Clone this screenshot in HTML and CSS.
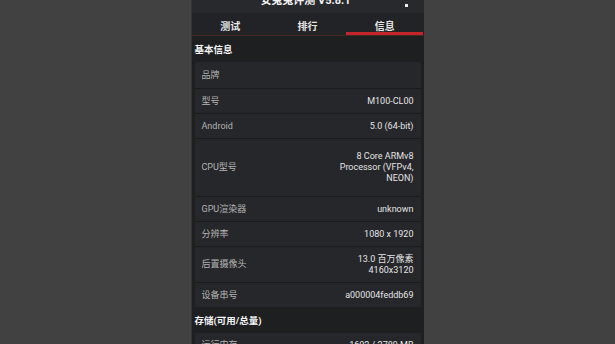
FILE: index.html
```html
<!DOCTYPE html>
<html lang="zh">
<head>
<meta charset="utf-8">
<link rel="stylesheet" href="styles.css">
</head>
<body>
<div class="phone">
  <div class="titlebar">
    <span class="title">安兔兔评测 V5.8.1</span>
    <span class="overflow"><i></i><i></i><i></i></span>
  </div>
  <div class="tabs">
    <div class="tab">测试</div>
    <div class="tab">排行</div>
    <div class="tab active">信息</div>
  </div>
  <div class="section">基本信息</div>
  <div class="card">
    <div class="row r26"><span class="label">品牌</span><span class="value"></span></div>
    <div class="row"><span class="label">型号</span><span class="value">M100-CL00</span></div>
    <div class="row"><span class="label">Android</span><span class="value">5.0 (64-bit)</span></div>
    <div class="row cpu"><span class="label">CPU型号</span><span class="value">8 Core ARMv8<br>Processor (VFPv4,<br>NEON)</span></div>
    <div class="row"><span class="label">GPU渲染器</span><span class="value">unknown</span></div>
    <div class="row"><span class="label">分辨率</span><span class="value">1080 x 1920</span></div>
    <div class="row cam"><span class="label">后置摄像头</span><span class="value">13.0 百万像素<br>4160x3120</span></div>
    <div class="row"><span class="label">设备串号</span><span class="value">a000004feddb69</span></div>
  </div>
  <div class="section">存储(可用/总量)</div>
  <div class="card">
    <div class="row"><span class="label">运行内存</span><span class="value">1602 / 2789 MB</span></div>
  </div>
</div>
</body>
</html>
```
FILE: styles.css
```css
html, body {
  margin: 0;
  padding: 0;
  background: #414141;
  height: 344px;
  overflow: hidden;
  font-family: Roboto, "Noto Sans CJK SC", sans-serif;
}
.phone {
  width: 232px;
  margin: -12px auto 0;
  height: 380px;
  background: #1e1f21;
  box-shadow: -1px 0 0 #363636;
  overflow: hidden;
}
.titlebar {
  height: 25px;
  background: #28292c;
  display: flex;
  align-items: center;
  justify-content: center;
  position: relative;
}
.title {
  color: #f2f2f2;
  font-size: 11px;
  font-weight: bold;
  margin-left: -4px;
  margin-top: -3px;
}
.overflow {
  position: absolute;
  right: 16px;
  top: 2px;
  display: flex;
  flex-direction: column;
  gap: 4px;
}
.overflow i {
  display: block;
  width: 3px;
  height: 3px;
  background: #eee;
}
.tabs {
  display: flex;
  height: 22px;
  background: #222326;
  border-bottom: 1px solid #43291f;
}
.tab {
  flex: 1;
  display: flex;
  align-items: center;
  justify-content: center;
  color: #e6e6e6;
  font-size: 10px;
  font-weight: bold;
  padding-top: 2px;
  box-sizing: border-box;
}
.tab.active {
  border-bottom: 3px solid #c2262c;
  padding-top: 5px;
}
.section {
  height: 26px;
  display: flex;
  align-items: center;
  padding-left: 3px;
  color: #f5f5f5;
  font-size: 9.5px;
  font-weight: bold;
}
.card {
  margin: 0 3px;
  display: flex;
  flex-direction: column;
  gap: 1px;
  background: #1b1c1e;
}
.row {
  background: #26272a;
  min-height: 24px;
  padding: 0 7px;
  display: flex;
  align-items: center;
  justify-content: space-between;
  font-size: 9px;
  line-height: 11px;
}
.row.r26 { min-height: 26px; }
.row.cpu { min-height: 57px; }
.row.cam { min-height: 35px; }
.label { color: #b3b3b3; }
.value { color: #e4e4e4; text-align: right; }
```
